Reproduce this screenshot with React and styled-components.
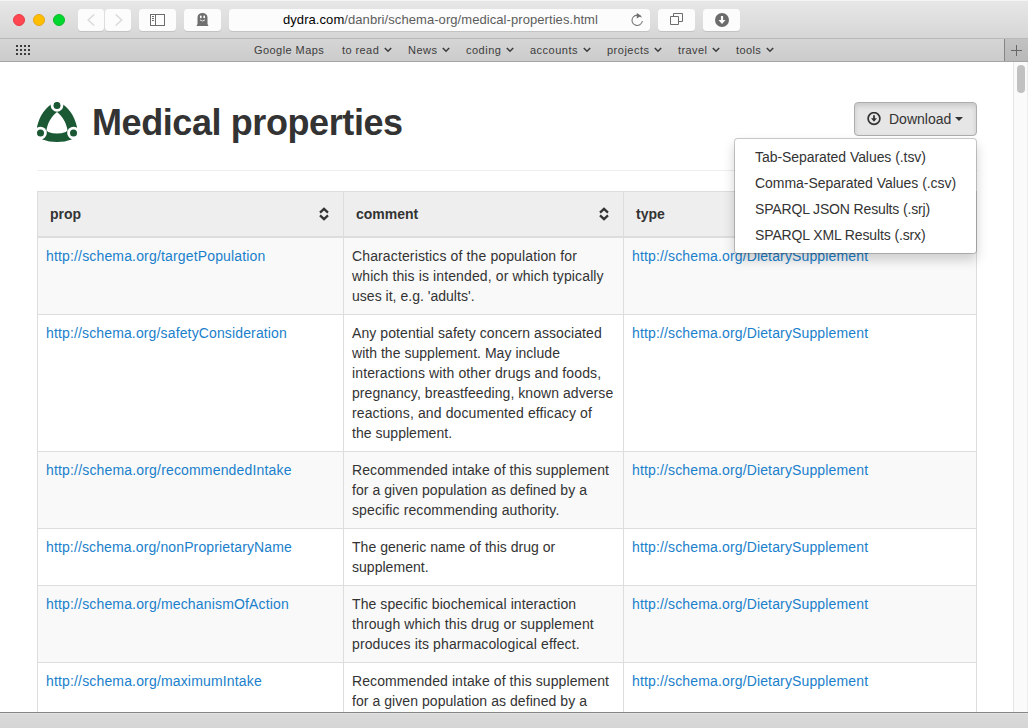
import React from "react";
import styled, { createGlobalStyle } from "styled-components";

const Global = createGlobalStyle`
  * { box-sizing: border-box; }
  html, body { margin: 0; padding: 0; background: #fff; overflow: hidden; }
  body { font-family: "Liberation Sans", Arial, sans-serif; font-size: 14px; line-height: 20px; color: #333; }
`;

const Window = styled.div`
  width: 1028px;
  height: 728px;
  display: flex;
  flex-direction: column;
  overflow: hidden;
  background: #fff;
`;

const Toolbar = styled.header`
  height: 38px;
  flex: none;
  display: flex;
  align-items: center;
  padding-left: 13px;
  border-top: 1px solid #f4f4f4;
  background: linear-gradient(#e7e7e7, #d6d6d6);
`;

const Light = styled.span`
  width: 12px;
  height: 12px;
  margin-right: 8px;
  border-radius: 50%;
  background: ${(p) => p.$fill};
  border: 1px solid ${(p) => p.$edge};
`;

const ToolButton = styled.button`
  width: ${(p) => p.$w}px;
  height: 22px;
  margin: 0 0 0 ${(p) => p.$gap}px;
  padding: 0;
  border: 0;
  border-radius: 3.5px;
  background: #fcfcfc;
  box-shadow: 0 1px 0 #c3c3c3;
  display: flex;
  align-items: center;
  justify-content: center;
  svg { display: block; }
`;

const AddressBar = styled.div`
  width: 421px;
  height: 22px;
  margin-left: 8px;
  padding: 0 6px 0 54px;
  border-radius: 3.5px;
  background: #fcfcfc;
  box-shadow: 0 1px 0 #c3c3c3;
  display: flex;
  align-items: center;
  justify-content: space-between;
  color: #5c5c5c;
  font-size: 13px;
  letter-spacing: 0.07px;
  white-space: nowrap;
  b { font-weight: 400; color: #000; }
`;

const Bookmarks = styled.nav`
  height: 24px;
  flex: none;
  display: flex;
  border-top: 1px solid #b9b9b9;
  border-bottom: 1px solid #a5a5a5;
  background: linear-gradient(#d5d5d5, #cccccc);
  font-size: 11px;
  color: #3c3c3c;
`;

const AppsGrid = styled.div`
  width: 254px;
  padding: 6px 0 0 16px;
  svg { display: block; }
`;

const BookmarkList = styled.div`
  flex: 1;
  display: flex;
  align-items: center;
`;

const Bookmark = styled.span`
  width: ${(p) => p.$w}px;
  display: flex;
  align-items: center;
  letter-spacing: ${(p) => p.$track}px;
  white-space: nowrap;
  svg { margin-left: 4.5px; }
`;

const NewTab = styled.div`
  width: 24px;
  display: flex;
  align-items: center;
  justify-content: center;
  border-left: 1px solid #858585;
  background: linear-gradient(#c2c2c2, #b8b8b8);
`;

const Viewport = styled.div`
  height: 650px;
  flex: none;
  display: flex;
  overflow: hidden;
`;

const Page = styled.main`
  flex: 1;
  padding: 40px 36px 0 37px;
  min-width: 0;
`;

const PageHeader = styled.div`
  height: 69px;
  display: flex;
  justify-content: space-between;
  align-items: flex-start;
  border-bottom: 1px solid #eee;
  margin-bottom: 20px;
`;

const Brand = styled.div`
  display: flex;
  align-items: flex-start;
  svg { display: block; }
`;

const Title = styled.h1`
  margin: 0 0 0 15px;
  font-size: 36px;
  line-height: 42px;
  font-weight: 700;
  letter-spacing: -0.41px;
  white-space: nowrap;
`;

const DownloadMenu = styled.div`
  position: relative;
`;

const DownloadButton = styled.button`
  display: flex;
  align-items: center;
  width: 123px;
  height: 34px;
  padding: 0 0 0 12px;
  border: 1px solid #adadad;
  border-radius: 4px;
  background: #e6e6e6;
  box-shadow: inset 0 3px 5px rgba(0, 0, 0, 0.125);
  font: inherit;
  color: #333;
  span { margin: 0 4px 0 8px; }
`;

const Menu = styled.ul`
  position: absolute;
  top: 36px;
  right: 0;
  width: 243px;
  height: 116px;
  margin: 0;
  padding: 6px 0 0 20px;
  list-style: none;
  background: #fff;
  border: 1px solid rgba(0, 0, 0, 0.2);
  background-clip: padding-box;
  border-radius: 4px;
  box-shadow: 0 6px 12px rgba(0, 0, 0, 0.175);
`;

const MenuItem = styled.li`
  height: 26px;
  line-height: 25px;
  white-space: nowrap;
  letter-spacing: ${(p) => p.$track}px;
`;

const Table = styled.table`
  width: 940px;
  table-layout: fixed;
  border-spacing: 0;
  border-top: 1px solid #ddd;
  border-right: 1px solid #ddd;
`;

const HeadCell = styled.th`
  width: ${(p) => p.$w}px;
  height: 46px;
  padding: 0 14px 0 12px;
  border-left: 1px solid #ddd;
  border-bottom: 2px solid #ddd;
  background: #eee;
  text-align: left;
`;

const HeadInner = styled.div`
  display: flex;
  justify-content: space-between;
  align-items: center;
  svg { display: block; }
`;

const Row = styled.tr`
  background: ${(p) => (p.$striped ? "#f9f9f9" : "#fff")};
`;

const Cell = styled.td`
  padding: 8px;
  border-left: 1px solid #ddd;
  border-bottom: 1px solid #ddd;
  vertical-align: top;
  white-space: nowrap;
`;

const Link = styled.a`
  color: #1a80cb;
  letter-spacing: ${(p) => p.$track || 0}px;
`;

const Line = styled.div`
  letter-spacing: ${(p) => p.$track || 0}px;
`;

const Scrollbar = styled.div`
  width: 15px;
  flex: none;
  padding: 3px 0 0 3px;
  border-left: 1px solid #e5e5e5;
  border-right: 1px solid #ececec;
  background: #fafafa;
`;

const Thumb = styled.div`
  width: 8px;
  height: 28px;
  border-radius: 4px;
  background: #c1c1c1;
`;

const StatusBar = styled.footer`
  height: 16px;
  flex: none;
  border-top: 1px solid #858585;
  background: linear-gradient(#e2e2e2 0 1px, #dadada 1px, #d5d5d5);
`;

const Chevron = ({ flip }) => (
  <svg width="9" height="14" viewBox="0 0 9 14" fill="none" stroke="#dadada" strokeWidth="1.5">
    <path d={flip ? "M1.7 1.5 7.7 7 1.7 12.5" : "M7.2 1.5 1.2 7 7.2 12.5"} />
  </svg>
);

const Sorter = () => (
  <svg width="10" height="14" viewBox="0 0 10 14" fill="none" stroke="#333" strokeWidth="2.3">
    <path d="M1 5.6 5 1.8 9 5.6M1 8.4 5 12.2 9 8.4" />
  </svg>
);

const Dots = () => (
  <svg width="15" height="11" fill="#3b3b3b">
    {[0, 1, 2].flatMap((r) =>
      [0, 1, 2, 3].map((c) => <rect key={`${r}-${c}`} x={c * 4} y={r * 4} width="2" height="2" />)
    )}
  </svg>
);

const Logo = () => (
  <svg width="40" height="40" viewBox="0 0 40 40">
    <path
      d="M20 -1C9 4 1.5 14 -0.5 28Q2 33 5.5 37.4Q12 40 20 40T34.5 37.4Q38 33 40.5 28C38.5 14 31 4 20 -1ZM20 10C24.8 13.5 29.3 20 30.6 28.5Q29.5 29 28.8 30Q20 33 11.2 30Q10.5 29 9.4 28.5C10.7 20 15.2 13.5 20 10Z"
      fill="#1a5934"
      fillRule="evenodd"
    />
    {[[20, 3.4], [3.5, 31], [36.5, 31]].map(([x, y]) => (
      <g key={x}>
        <circle cx={x} cy={y} r="6.3" fill="#fff" />
        <circle cx={x} cy={y} r="3.5" fill="#1a5934" />
      </g>
    ))}
  </svg>
);

const bookmarks = [
  ["Google Maps", 88, false, 0.43],
  ["to read", 66, true, 0.42],
  ["News", 58, true, 0.5],
  ["coding", 64, true, 0.5],
  ["accounts", 77, true, 0.5],
  ["projects", 71, true, 0.5],
  ["travel", 58, true, 0.4],
  ["tools", 60, true, 0.4],
];

const formats = [
  ["Tab-Separated Values (.tsv)", -0.06],
  ["Comma-Separated Values (.csv)", -0.03],
  ["SPARQL JSON Results (.srj)", -0.15],
  ["SPARQL XML Results (.srx)", -0.13],
];

const rows = [
  ["targetPopulation", 0.16, [
    ["Characteristics of the population for", 0.13],
    ["which this is intended, or which typically", 0.12],
    ["uses it, e.g. 'adults'.", 0.02],
  ]],
  ["safetyConsideration", 0.14, [
    ["Any potential safety concern associated", 0.08],
    ["with the supplement. May include", 0.03],
    ["interactions with other drugs and foods,", 0.12],
    ["pregnancy, breastfeeding, known adverse", 0.06],
    ["reactions, and documented efficacy of", 0.12],
    ["the supplement.", 0.03],
  ]],
  ["recommendedIntake", 0.17, [
    ["Recommended intake of this supplement", 0.09],
    ["for a given population as defined by a", 0.06],
    ["specific recommending authority.", 0.12],
  ]],
  ["nonProprietaryName", 0.13, [
    ["The generic name of this drug or", 0.03],
    ["supplement.", 0.03],
  ]],
  ["mechanismOfAction", 0.16, [
    ["The specific biochemical interaction", 0.09],
    ["through which this drug or supplement", 0.12],
    ["produces its pharmacological effect.", 0.13],
  ]],
  ["maximumIntake", 0.16, [
    ["Recommended intake of this supplement", 0.09],
    ["for a given population as defined by a", 0.06],
  ]],
];

export default function App() {
  return (
    <Window>
      <Global />
      <Toolbar>
        <Light $fill="#ff4651" $edge="#e83b45" />
        <Light $fill="#ffbf00" $edge="#e6a616" />
        <Light $fill="#00d82f" $edge="#0dbb2a" />
        <ToolButton $w={26} $gap={5}><Chevron /></ToolButton>
        <ToolButton $w={26} $gap={1}><Chevron flip /></ToolButton>
        <ToolButton $w={37} $gap={8}>
          <svg width="15" height="12" fill="none" stroke="#6c6c6c">
            <rect x=".5" y=".5" width="14" height="11" />
            <path d="M5.5 0V12M2 2.5H4M2 4.5H4M2 6.5H4" />
          </svg>
        </ToolButton>
        <ToolButton $w={37} $gap={8}>
          <svg width="13" height="13" viewBox="0 0 13 13">
            <path d="M1.5 11V4.5C1.5 1.7 3.6 0 6.5 0S11.5 1.7 11.5 4.5V11L12.5 13H.5Z" fill="#6f6f6f" />
            <ellipse cx="4.8" cy="3.9" rx=".9" ry="1.3" fill="#fff" />
            <ellipse cx="8.2" cy="3.9" rx=".9" ry="1.3" fill="#fff" />
            <path d="M4 6.9Q6.5 9.1 9 6.9" fill="none" stroke="#eee" strokeWidth=".9" />
          </svg>
        </ToolButton>
        <AddressBar>
          <span><b>dydra.com</b>/danbri/schema-org/medical-properties.html</span>
          <svg width="13" height="14" viewBox="0 0 13 14">
            <path d="M10.5 4.3A5.2 5.2 0 1 0 11.4 8M9.7 3.5A5.2 5.2 0 0 0 6.2 2.6" fill="none" stroke="#777" strokeWidth="1.1" />
            <path d="M5.8 0 10 2.7 5.8 5.4Z" fill="#6c6c6c" />
          </svg>
        </AddressBar>
        <ToolButton $w={37} $gap={8}>
          <svg width="13" height="13" fill="none" stroke="#6c6c6c">
            <path d="M.5 3.5H8.5V11.5H.5ZM3.5 3V.5H12.5V8.5H9" />
          </svg>
        </ToolButton>
        <ToolButton $w={37} $gap={8}>
          <svg width="14" height="14">
            <circle cx="7" cy="7" r="7" fill="#6c6c6c" />
            <path d="M5.9 3H8.1V7H10.5L7 11 3.5 7H5.9Z" fill="#fff" />
          </svg>
        </ToolButton>
      </Toolbar>
      <Bookmarks>
        <AppsGrid><Dots /></AppsGrid>
        <BookmarkList>
          {bookmarks.map(([name, w, menu, track]) => (
            <Bookmark key={name} $w={w} $track={track}>
              {name}
              {menu && (
                <svg width="8" height="6" fill="none" stroke="#3e3e3e" strokeWidth="1.6">
                  <path d="M.8 1 4 4.2 7.2 1" />
                </svg>
              )}
            </Bookmark>
          ))}
        </BookmarkList>
        <NewTab>
          <svg width="11" height="11" stroke="#666"><path d="M5.5 0V11M0 5.5H11" /></svg>
        </NewTab>
      </Bookmarks>
      <Viewport>
        <Page>
          <PageHeader>
            <Brand>
              <Logo />
              <Title>Medical properties</Title>
            </Brand>
            <DownloadMenu>
              <DownloadButton>
                <svg width="14" height="14" viewBox="0 0 14 14">
                  <circle cx="7" cy="6.5" r="5.9" fill="none" stroke="#333" strokeWidth="1.7" />
                  <path d="M6.1 3.2H7.9V6.3H10L7 9.7 4 6.3H6.1Z" fill="#333" />
                </svg>
                <span>Download</span>
                <svg width="8" height="4"><path d="M0 0H8L4 4Z" fill="#333" /></svg>
              </DownloadButton>
              <Menu>
                {formats.map(([label, track]) => <MenuItem key={label} $track={track}>{label}</MenuItem>)}
              </Menu>
            </DownloadMenu>
          </PageHeader>
          <Table>
            <thead>
              <tr>
                <HeadCell $w={306}><HeadInner>prop<Sorter /></HeadInner></HeadCell>
                <HeadCell $w={280}><HeadInner>comment<Sorter /></HeadInner></HeadCell>
                <HeadCell $w={353}><HeadInner>type<Sorter /></HeadInner></HeadCell>
              </tr>
            </thead>
            <tbody>
              {rows.map(([name, track, lines], i) => (
                <Row key={name} $striped={i % 2 === 0}>
                  <Cell><Link $track={track}>http://schema.org/{name}</Link></Cell>
                  <Cell>
                    {lines.map(([text, spacing]) => <Line key={text} $track={spacing}>{text}</Line>)}
                  </Cell>
                  <Cell><Link $track={0.145}>http://schema.org/DietarySupplement</Link></Cell>
                </Row>
              ))}
            </tbody>
          </Table>
        </Page>
        <Scrollbar><Thumb /></Scrollbar>
      </Viewport>
      <StatusBar />
    </Window>
  );
}
